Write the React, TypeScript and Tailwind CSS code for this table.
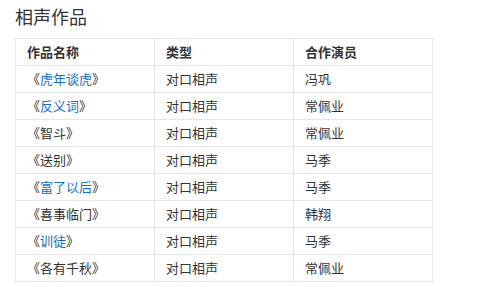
const rows: { title: string; link: boolean; type: string; partner: string }[] = [
  { title: "虎年谈虎", link: true, type: "对口相声", partner: "冯巩" },
  { title: "反义词", link: true, type: "对口相声", partner: "常佩业" },
  { title: "智斗", link: false, type: "对口相声", partner: "常佩业" },
  { title: "送别", link: false, type: "对口相声", partner: "马季" },
  { title: "富了以后", link: true, type: "对口相声", partner: "马季" },
  { title: "喜事临门", link: false, type: "对口相声", partner: "韩翔" },
  { title: "训徒", link: true, type: "对口相声", partner: "马季" },
  { title: "各有千秋", link: false, type: "对口相声", partner: "常佩业" },
]

export default function App() {
  return (
    <div
      className="min-h-[287px] w-[487px] bg-white text-[#333]"
      style={{ fontFamily: '"Noto Sans CJK SC", "Noto Sans", Arial, sans-serif' }}
    >
      <div className="px-[15px] pt-[3px]">
        <h2 className="text-[18px] leading-[27px] font-normal text-[#333]">相声作品</h2>
        <table className="mt-[8px] w-[417px] table-fixed border-collapse text-[13px]">
          <thead>
            <tr className="h-[27px]">
              <th className="w-[139px] border border-[#e6e6e6] px-[11px] text-left font-bold">作品名称</th>
              <th className="w-[139px] border border-[#e6e6e6] px-[11px] text-left font-bold">类型</th>
              <th className="w-[139px] border border-[#e6e6e6] px-[11px] text-left font-bold">合作演员</th>
            </tr>
          </thead>
          <tbody>
            {rows.map((r) => (
              <tr key={r.title} className="h-[27px]">
                <td className="border border-[#e6e6e6] px-[11px]">
                  《
                  {r.link ? <a className="text-[#136ec2]">{r.title}</a> : r.title}
                  》
                </td>
                <td className="border border-[#e6e6e6] px-[11px]">{r.type}</td>
                <td className="border border-[#e6e6e6] px-[11px]">{r.partner}</td>
              </tr>
            ))}
          </tbody>
        </table>
      </div>
    </div>
  )
}
